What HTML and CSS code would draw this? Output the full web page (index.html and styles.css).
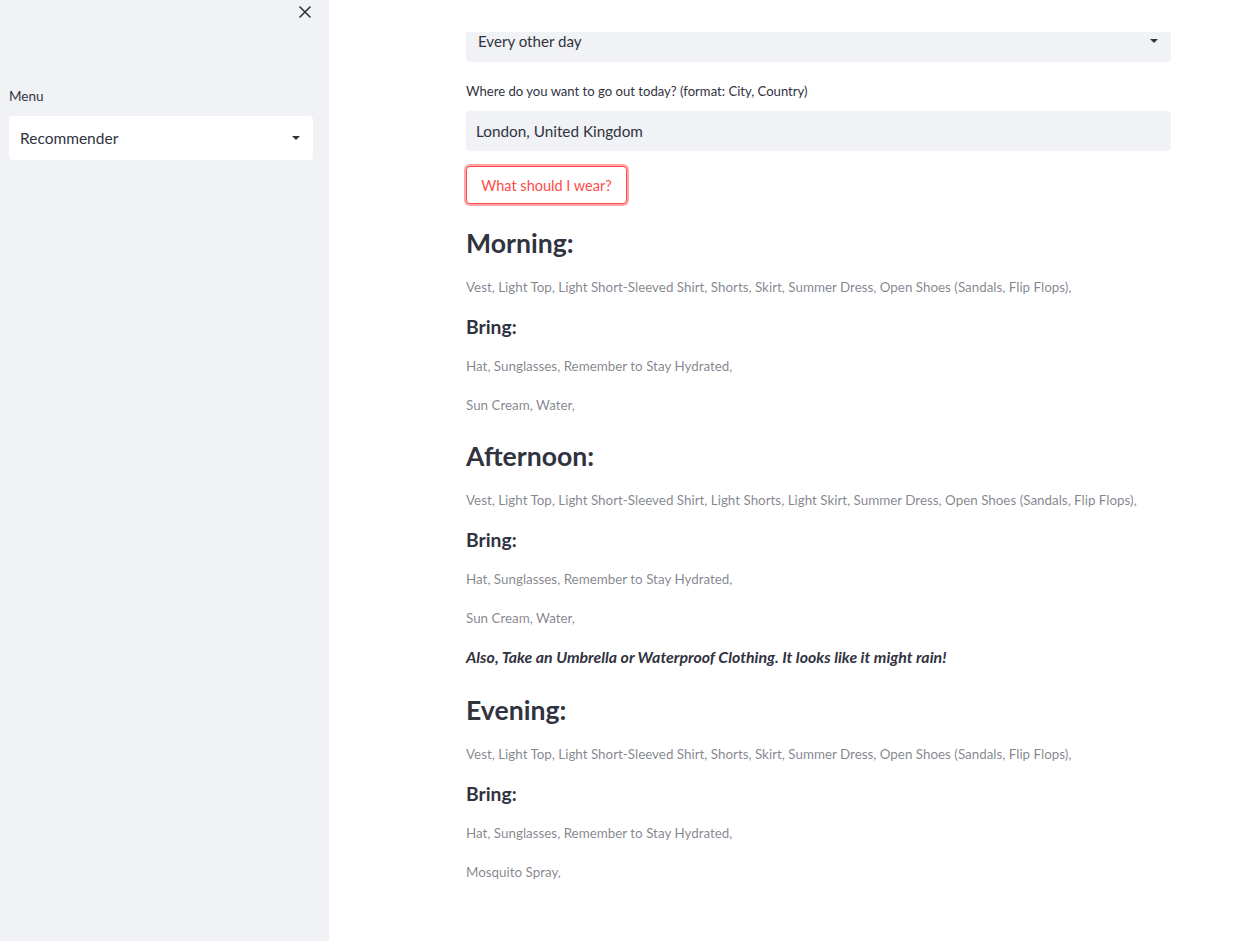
FILE: index.html
```html
<!DOCTYPE html>
<html lang="en">
<head>
<meta charset="utf-8">
<title>Outfit Recommender</title>
<link rel="stylesheet" href="styles.css">
</head>
<body>
<div class="app">
  <aside class="sidebar">
    <div class="sidebar-top">
      <button class="close-btn" aria-label="Close sidebar">
        <svg width="14" height="14" viewBox="0 0 14 14"><path d="M1.5 1.5 L12.5 12.5 M12.5 1.5 L1.5 12.5" stroke="#31333f" stroke-width="1.6" fill="none"/></svg>
      </button>
    </div>
    <div class="sb-label">Menu</div>
    <div class="sb-select">
      <span>Recommender</span>
      <svg class="caret" width="8" height="4" viewBox="0 0 8 4"><path d="M0 0 L8 0 L4 4 Z" fill="#31333f"/></svg>
    </div>
  </aside>
  <main class="main">
    <div class="header"></div>
    <div class="content">
      <div class="select">
        <span>Every other day</span>
        <svg class="caret" width="8" height="4" viewBox="0 0 8 4"><path d="M0 0 L8 0 L4 4 Z" fill="#31333f"/></svg>
      </div>
      <div class="label">Where do you want to go out today? (format: City, Country)</div>
      <div class="input">London, United Kingdom</div>
      <button class="btn">What should I wear?</button>

      <h3 class="period first">Morning:</h3>
      <p class="cap">Vest, Light Top, Light Short-Sleeved Shirt, Shorts, Skirt, Summer Dress, Open Shoes (Sandals, Flip Flops),</p>
      <h4 class="bring">Bring:</h4>
      <p class="cap">Hat, Sunglasses, Remember to Stay Hydrated,</p>
      <p class="cap">Sun Cream, Water,</p>

      <h3 class="period">Afternoon:</h3>
      <p class="cap">Vest, Light Top, Light Short-Sleeved Shirt, Light Shorts, Light Skirt, Summer Dress, Open Shoes (Sandals, Flip Flops),</p>
      <h4 class="bring">Bring:</h4>
      <p class="cap">Hat, Sunglasses, Remember to Stay Hydrated,</p>
      <p class="cap">Sun Cream, Water,</p>
      <p class="note">Also, Take an Umbrella or Waterproof Clothing. It looks like it might rain!</p>

      <h3 class="period late">Evening:</h3>
      <p class="cap">Vest, Light Top, Light Short-Sleeved Shirt, Shorts, Skirt, Summer Dress, Open Shoes (Sandals, Flip Flops),</p>
      <h4 class="bring">Bring:</h4>
      <p class="cap">Hat, Sunglasses, Remember to Stay Hydrated,</p>
      <p class="cap">Mosquito Spray,</p>
    </div>
  </main>
</div>
</body>
</html>
```
FILE: styles.css
```css
* { box-sizing: border-box; }
html, body { margin: 0; padding: 0; height: 100%; }
body {
  font-family: "Lato", "Liberation Sans", sans-serif;
  color: #31333f;
  background: #ffffff;
}
.app {
  display: flex;
  width: 1236px;
  height: 941px;
  overflow: hidden;
}
.sidebar {
  width: 329px;
  flex: none;
  background: #f0f2f6;
  padding: 0 16px 0 9px;
  display: flex;
  flex-direction: column;
}
.sidebar-top {
  height: 24px;
  display: flex;
  justify-content: flex-end;
  align-items: center;
}
.close-btn {
  border: none;
  background: transparent;
  padding: 0;
  width: 14px;
  height: 14px;
  margin-right: 1px;
  display: flex;
}
.sb-label {
  margin-top: 62px;
  font-size: 13.5px;
  line-height: 20px;
  height: 20px;
}
.sb-select {
  margin-top: 10px;
  height: 44px;
  width: 304px;
  background: #ffffff;
  border-radius: 4px;
  display: flex;
  align-items: center;
  justify-content: space-between;
  padding: 0 13px 0 11px;
  font-size: 15.5px;
}
.main {
  flex: 1;
  position: relative;
}
.header {
  position: absolute;
  left: 0; top: 0; right: 0;
  height: 32px;
  background: #ffffff;
  z-index: 2;
}
.content {
  width: 705px;
  margin-left: 137px;
  padding-top: 22px;
  display: flex;
  flex-direction: column;
  align-items: flex-start;
}
.select {
  width: 100%;
  height: 40px;
  background: #f0f2f6;
  border-radius: 4px;
  display: flex;
  align-items: center;
  justify-content: space-between;
  padding: 0 13px 2px 12px;
  font-size: 15.1px;
}
.label {
  margin-top: 19px;
  font-size: 13.1px;
  line-height: 20px;
  height: 20px;
}
.input {
  margin-top: 10px;
  width: 100%;
  height: 40px;
  background: #f0f2f6;
  border-radius: 4px;
  display: flex;
  align-items: center;
  padding: 0 10px;
  font-size: 15.3px;
}
.btn {
  margin-top: 15px;
  height: 38px;
  width: 161px;
  border: 1px solid #ff4b4b;
  border-radius: 4px;
  background: #ffffff;
  color: #ff4b4b;
  font-family: inherit;
  font-size: 14.5px;
  box-shadow: 0 0 0 2px rgba(255, 75, 75, 0.5);
  padding: 0;
}
.period {
  margin: 8px 0 0;
  height: 48px;
  line-height: 48px;
  font-size: 26.6px;
  font-weight: 700;
}
.period.first { margin-top: 15px; }
.period.late { margin-top: 9px; }
.bring {
  margin: 0;
  height: 40px;
  line-height: 42px;
  font-size: 19.3px;
  font-weight: 700;
}
.cap {
  margin: 0;
  height: 39px;
  line-height: 41px;
  font-size: 13.4px;
  color: rgba(49, 51, 63, 0.6);
}
.note {
  margin: 0;
  height: 40px;
  line-height: 40px;
  font-size: 15.9px;
  font-style: italic;
  font-weight: 700;
}
```
